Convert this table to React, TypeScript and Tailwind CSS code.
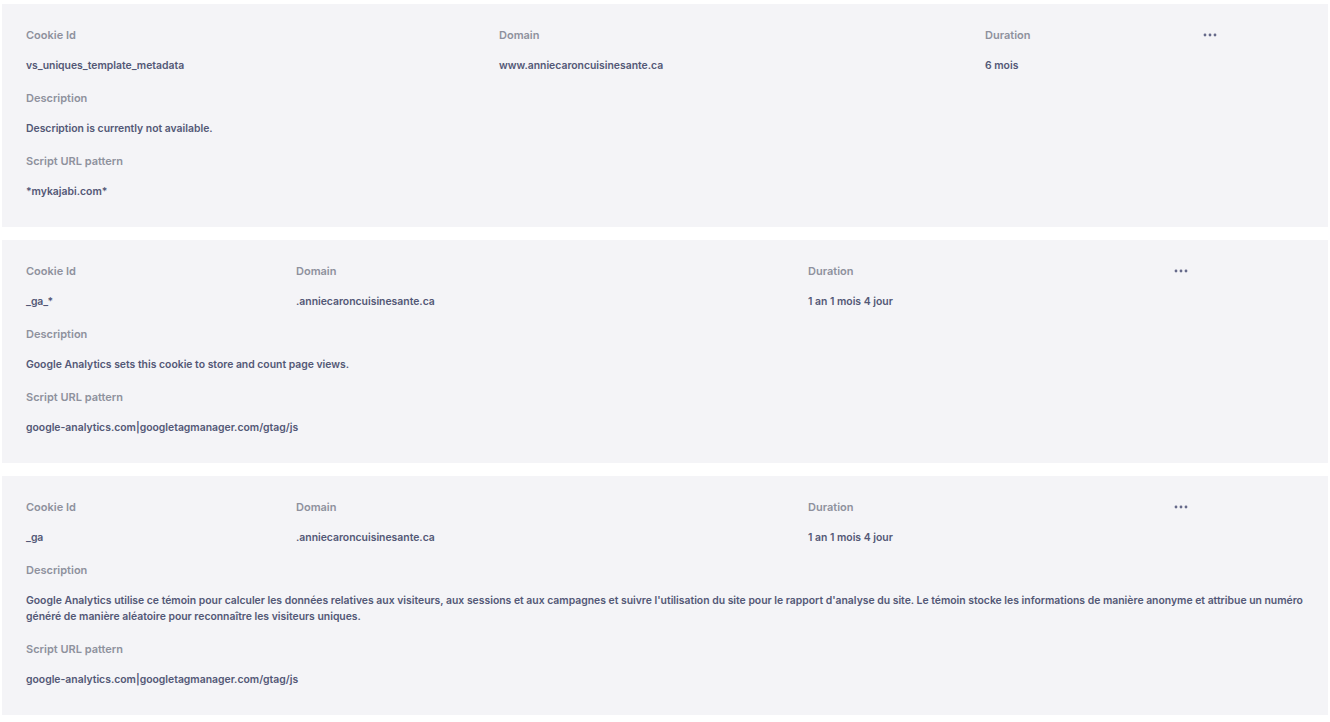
import React from 'react';

interface CookieInfo {
  id: string;
  domain: string;
  duration: string;
  description: string;
  pattern: string;
  cols: string;
}

const cookies: CookieInfo[] = [
  {
    id: 'vs_uniques_template_metadata',
    domain: 'www.anniecaroncuisinesante.ca',
    duration: '6 mois',
    description: 'Description is currently not available.',
    pattern: '*mykajabi.com*',
    cols: 'grid-cols-[473px_486px_218px_1fr]',
  },
  {
    id: '_ga_*',
    domain: '.anniecaroncuisinesante.ca',
    duration: '1 an 1 mois 4 jour',
    description: 'Google Analytics sets this cookie to store and count page views.',
    pattern: 'google-analytics.com|googletagmanager.com/gtag/js',
    cols: 'grid-cols-[270px_512px_366px_1fr]',
  },
  {
    id: '_ga',
    domain: '.anniecaroncuisinesante.ca',
    duration: '1 an 1 mois 4 jour',
    description:
      "Google Analytics utilise ce témoin pour calculer les données relatives aux visiteurs, aux sessions et aux campagnes et suivre l'utilisation du site pour le rapport d'analyse du site. Le témoin stocke les informations de manière anonyme et attribue un numéro généré de manière aléatoire pour reconnaître les visiteurs uniques.",
    pattern: 'google-analytics.com|googletagmanager.com/gtag/js',
    cols: 'grid-cols-[270px_512px_366px_1fr]',
  },
];

function Label({ children }: { children: React.ReactNode }) {
  return <div className="text-[11px] leading-4 font-semibold text-[#8e919d]">{children}</div>;
}

function Value({ children }: { children: React.ReactNode }) {
  return <div className="mt-[15px] text-[10.4px] leading-4 font-semibold text-[#535876]">{children}</div>;
}

function MoreDots() {
  return (
    <svg width="14" height="16" viewBox="0 0 14 16" className="block">
      <circle cx="2" cy="8" r="1.4" fill="#666a8a" />
      <circle cx="7" cy="8" r="1.4" fill="#666a8a" />
      <circle cx="12" cy="8" r="1.4" fill="#666a8a" />
    </svg>
  );
}

function CookieCard({ cookie }: { cookie: CookieInfo }) {
  return (
    <div className="bg-[#f4f4f7] pt-[23px] pb-[27px] px-6">
      <div className={`grid ${cookie.cols}`}>
        <div>
          <Label>Cookie Id</Label>
          <Value>{cookie.id}</Value>
        </div>
        <div>
          <Label>Domain</Label>
          <Value>{cookie.domain}</Value>
        </div>
        <div>
          <Label>Duration</Label>
          <Value>{cookie.duration}</Value>
        </div>
        <div>
          <MoreDots />
        </div>
      </div>

      {/* Description */}
      <div className="mt-4">
        <Label>Description</Label>
        <Value>{cookie.description}</Value>
      </div>

      {/* Script pattern */}
      <div className="mt-4">
        <Label>Script URL pattern</Label>
        <Value>{cookie.pattern}</Value>
      </div>
    </div>
  );
}

export default function App() {
  return (
    <div className="min-h-screen bg-white px-[2px] pt-[4px] flex flex-col gap-[13px] font-['Inter','Liberation_Sans',sans-serif]">
      {cookies.map((cookie) => (
        <CookieCard key={cookie.id} cookie={cookie} />
      ))}
    </div>
  );
}
